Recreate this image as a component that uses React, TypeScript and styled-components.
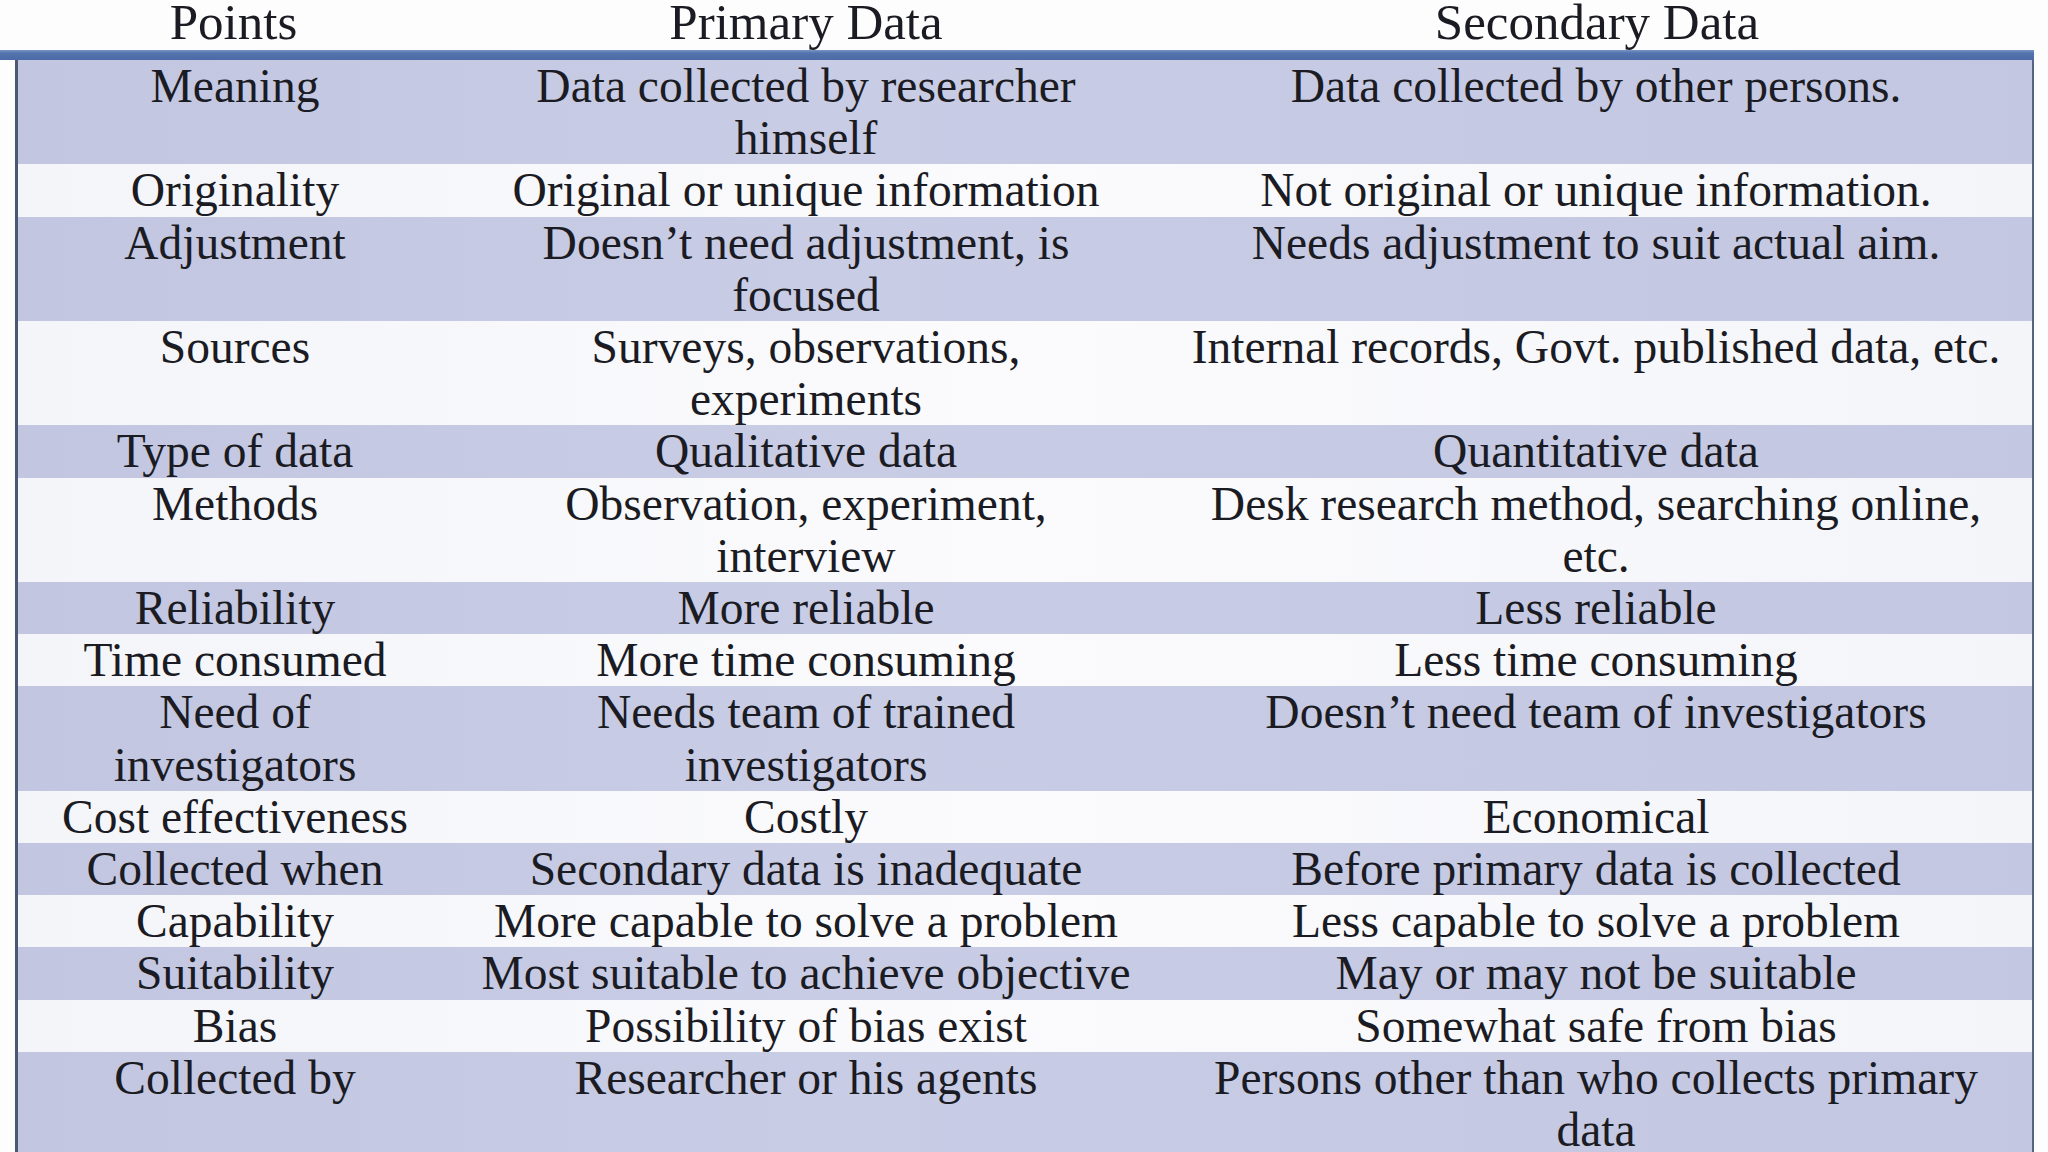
import React from "react";
import styled, { createGlobalStyle } from "styled-components";

const Global = createGlobalStyle`
  html, body { margin: 0; padding: 0; background: #fdfdfd; }
  body { overflow: hidden; width: 2048px; height: 1152px; }
`;

const Page = styled.div`
  width: 2048px;
  height: 1152px;
  overflow: hidden;
  background: #fdfdfd;
  font-family: "Liberation Serif", "DejaVu Serif", serif;
  color: #1b1b23;
`;

const HeaderRow = styled.div`
  display: grid;
  grid-template-columns: 437px 708px 874px;
  padding-left: 15px;
  height: 50px;
  align-items: start;
`;

const HeadCell = styled.div`
  text-align: center;
  font-size: 51px;
  line-height: 44px;
  white-space: nowrap;
`;

const Bar = styled.div`
  width: 2034px;
  height: 10px;
  background: linear-gradient(#7a96c8 0%, #5474ae 30%, #4b6aa6 100%);
`;

const Body = styled.div`
  margin-left: 15px;
  width: 2019px;
  border-left: 3px solid #4b5773;
  border-right: 2px solid #56647f;
  box-shadow: inset -2px 0 0 #a9b8dc;
  box-sizing: border-box;
`;

const Row = styled.div<{ $shade: boolean }>`
  display: grid;
  grid-template-columns: 434px 708px 1fr;
  background: ${(p) =>
    p.$shade
      ? "linear-gradient(90deg, #c2c6e0 0%, #c8cce5 40%, #c3c7e1 100%)"
      : "linear-gradient(90deg, #f4f5f9 0%, #fbfbfd 50%, #f4f5f9 100%)"};
`;

const Cell = styled.div`
  text-align: center;
  font-size: 47.5px;
  line-height: 52.2px;
  white-space: nowrap;
`;

const Line = styled.div``;

const rows: [string[], string[], string[]][] = [
  [["Meaning"], ["Data collected by researcher", "himself"], ["Data collected by other persons."]],
  [["Originality"], ["Original or unique information"], ["Not original or unique information."]],
  [["Adjustment"], ["Doesn\u2019t need adjustment, is", "focused"], ["Needs adjustment to suit actual aim."]],
  [["Sources"], ["Surveys, observations,", "experiments"], ["Internal records, Govt. published data, etc."]],
  [["Type of data"], ["Qualitative data"], ["Quantitative data"]],
  [["Methods"], ["Observation, experiment,", "interview"], ["Desk research method, searching online,", "etc."]],
  [["Reliability"], ["More reliable"], ["Less reliable"]],
  [["Time consumed"], ["More time consuming"], ["Less time consuming"]],
  [["Need of", "investigators"], ["Needs team of trained", "investigators"], ["Doesn\u2019t need team of investigators"]],
  [["Cost effectiveness"], ["Costly"], ["Economical"]],
  [["Collected when"], ["Secondary data is inadequate"], ["Before primary data is collected"]],
  [["Capability"], ["More capable to solve a problem"], ["Less capable to solve a problem"]],
  [["Suitability"], ["Most suitable to achieve objective"], ["May or may not be suitable"]],
  [["Bias"], ["Possibility of bias exist"], ["Somewhat safe from bias"]],
  [["Collected by"], ["Researcher or his agents"], ["Persons other than who collects primary", "data"]],
];

export default function App() {
  return (
    <Page>
      <Global />
      <HeaderRow>
        <HeadCell>Points</HeadCell>
        <HeadCell>Primary Data</HeadCell>
        <HeadCell>Secondary Data</HeadCell>
      </HeaderRow>
      <Bar />
      <Body>
        {rows.map((r, i) => (
          <Row key={r[0].join(" ")} $shade={i % 2 === 0}>
            {r.map((cell, j) => (
              <Cell key={j}>
                {cell.map((l) => (
                  <Line key={l}>{l}</Line>
                ))}
              </Cell>
            ))}
          </Row>
        ))}
      </Body>
    </Page>
  );
}
